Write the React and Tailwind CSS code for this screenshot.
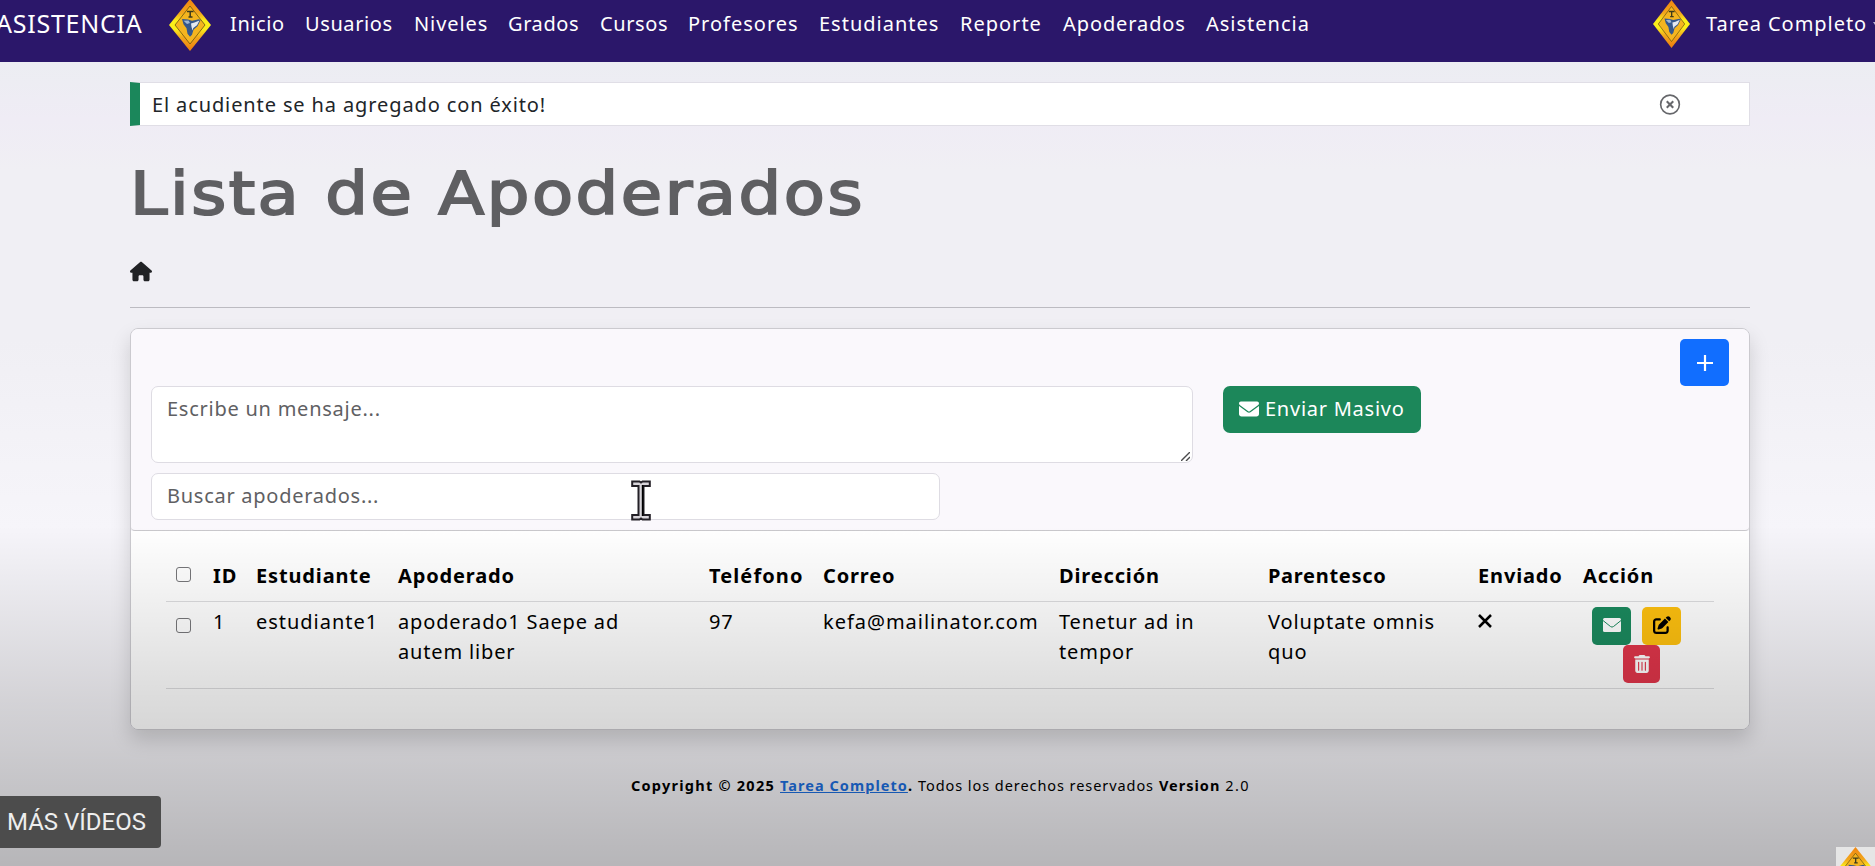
import { FaEnvelope, FaHouse, FaPenToSquare, FaTrashCan } from "react-icons/fa6";

const NAV = [
  { label: "Inicio", cls: "w-[75px] tracking-[0.6px]" },
  { label: "Usuarios", cls: "w-[109px] tracking-[0.6px]" },
  { label: "Niveles", cls: "w-[94px] tracking-[0.9px]" },
  { label: "Grados", cls: "w-[92px] tracking-[0.6px]" },
  { label: "Cursos", cls: "w-[88px] tracking-[0.6px]" },
  { label: "Profesores", cls: "w-[131px] tracking-[1px]" },
  { label: "Estudiantes", cls: "w-[141px] tracking-[1px]" },
  { label: "Reporte", cls: "w-[103px] tracking-[1px]" },
  { label: "Apoderados", cls: "w-[143px] tracking-[0.9px]" },
  { label: "Asistencia", cls: "w-[110px] tracking-[1px]" },
];

function Logo({ className }) {
  return (
    <svg viewBox="0 0 42 52" preserveAspectRatio="none" className={className}>
      <defs>
        <linearGradient id="rim" x1="0" y1="0" x2="0" y2="1">
          <stop offset="0.05" stopColor="#f08a12" />
          <stop offset="0.28" stopColor="#f2a81c" />
          <stop offset="0.42" stopColor="#fbee1a" />
          <stop offset="0.58" stopColor="#fbee1a" />
          <stop offset="0.74" stopColor="#f2a81c" />
          <stop offset="0.95" stopColor="#ee8410" />
        </linearGradient>
      </defs>
      <polygon points="21,0 42,26 21,52 0,26" fill="url(#rim)" />
      <polygon points="21,7 36,26 21,45 6,26" fill="#f4b51f" stroke="#6b5310" strokeWidth="0.8" />
      <path d="M18 12.500h6.500M21.200 12.500v5.500M19.500 18h4" stroke="#3d3a1c" strokeWidth="1.500" fill="none" />
      <path d="M13 20l6 .5 4 1.200 7-1.500 1.500 1-3 6-4 3.500-1.500 5-2 2-2.500-3-1-5.500-3-4z" fill="#35588c" />
      <path d="M22 24.500l3.500-1 5-2-2.500 4.800-3.700 2.700-.8 2.500-1-3.500z" fill="#e4e9f0" />
      <path d="M14.500 21.800l5-.3 1.500 2.500-3 1z" fill="#9db6d4" />
    </svg>
  );
}

function Navbar() {
  return (
    <header className="flex h-[62px] items-start bg-[#2b176a] text-[20px] leading-[30px] text-white">
      <div className="-ml-1 w-[173px] shrink-0 pt-[8px] text-[25px] tracking-[0.75px]">ASISTENCIA</div>
      <Logo className="-mt-[1px] h-[52px] w-[42px] shrink-0" />
      <nav className="flex pt-[9px] pl-[19px]">
        {NAV.map((item) => (
          <a key={item.label} className={`shrink-0 whitespace-nowrap ${item.cls}`}>
            {item.label}
          </a>
        ))}
      </nav>
      <div className="ml-auto flex w-[222px] shrink-0 whitespace-nowrap">
        <Logo className="h-[48px] w-[37px] shrink-0" />
        <span className="w-[183px] shrink-0 pt-[9px] pl-[16px] tracking-[0.95px]">Tarea Completo</span>
        <svg viewBox="0 0 2 3" className="mt-[22px] h-[3px] w-[2px] shrink-0 fill-[#b9b2d6]">
          <path d="M0 0h2v3z" />
        </svg>
      </div>
    </header>
  );
}

function Notice() {
  return (
    <div className="flex h-[44px] items-center border border-l-[10px] border-[#e0dee6] border-l-[#1b875b] bg-white pr-[68px] pl-[12px]">
      <p className="pt-[1px] text-[20px] leading-[30px] tracking-[0.88px] text-[#212529]">
        El acudiente se ha agregado con éxito!
      </p>
      <svg viewBox="0 0 22 22" className="ml-auto h-[21px] w-[22px]" fill="none" stroke="#66676b">
        <circle cx="11" cy="11" r="9.8" strokeWidth="1.7" />
        <path d="M7.6 7.6l6.8 6.8M14.4 7.6l-6.8 6.8" strokeWidth="2.200" />
      </svg>
    </div>
  );
}

function TextCursor() {
  return (
    <svg viewBox="0 0 20 41" className="absolute top-[7px] left-[480px] h-[41px] w-[20px]">
      <path
        d="M1.200 1.500h7.300l1.500 1 1.500-1h7.300v4.500h-6.300v29h6.300v4.500h-7.300l-1.500-1-1.500 1H1.200v-4.500h6.300v-29H1.200z"
        fill="#d8d5da"
        stroke="#232026"
        strokeWidth="2"
      />
      <path d="M11.600 5v31" stroke="#000" strokeWidth="1.600" />
    </svg>
  );
}

function CardHeader() {
  return (
    <div className="h-[202px] rounded-t-[7px] rounded-b-[4px] border-b border-[#c9c8cc] bg-[#faf8fc] px-5 pt-[10px]">
      <div className="flex justify-end">
        <button className="flex h-[47px] w-[49px] items-center justify-center rounded-[5px] bg-[#116eff]">
          <svg viewBox="0 0 16 16" className="h-4 w-4" stroke="#fff" strokeWidth="2.200">
            <path d="M8 0v16M0 8h16" />
          </svg>
        </button>
      </div>
      <div className="flex items-start">
        <div className="relative">
          <textarea
            className="block h-[77px] w-[1042px] resize-none rounded-[7px] border border-[#dedce3] bg-white px-[15px] py-[7px] text-[20px] leading-[30px] tracking-[0.75px] placeholder:text-[#5f6063]"
            placeholder="Escribe un mensaje..."
          />
          <svg viewBox="0 0 9 9" className="absolute right-[3px] bottom-[2px] h-[9px] w-[9px]" stroke="#4a4a4c" strokeWidth="1.400">
            <path d="M0 9L9 0M5 9l4-4" />
          </svg>
        </div>
        <button className="ml-[30px] flex h-[47px] w-[198px] items-center gap-[6px] rounded-[7px] bg-[#1c875a] pb-[2px] pl-4 text-[20px] leading-[30px] tracking-[0.75px] whitespace-nowrap text-white">
          <FaEnvelope className="h-5 w-5 shrink-0" />
          Enviar Masivo
        </button>
      </div>
      <div className="relative mt-[10px] w-[789px]">
        <input
          className="block h-[47px] w-full rounded-[7px] border border-[#dedce3] bg-white px-[15px] pb-[2px] text-[20px] leading-[30px] tracking-[0.73px] placeholder:text-[#5f6063]"
          placeholder="Buscar apoderados..."
        />
        <TextCursor />
      </div>
    </div>
  );
}

const GRID =
  "grid grid-cols-[47px_43px_142px_311px_114px_236px_209px_210px_105px_131px] border-b border-[#dddddf]";

function CheckBox({ className }) {
  return (
    <div className={`ml-[10px] h-[15px] w-[15px] rounded-[3px] border-[1.5px] border-[#77777a] bg-white ${className}`} />
  );
}

function GuardianTable() {
  return (
    <div className="h-[198px] rounded-b-[7px] bg-white pt-[25px] pr-[35px] pl-[35px] text-[20px] leading-[30px] tracking-[0.9px] whitespace-nowrap text-black">
      <div className={`${GRID} h-[46px] pt-[5px] font-bold tracking-[0.85px]`}>
        <CheckBox className="mt-[6px]" />
        <span>ID</span>
        <span>Estudiante</span>
        <span>Apoderado</span>
        <span className="tracking-[1.1px]">Teléfono</span>
        <span>Correo</span>
        <span>Dirección</span>
        <span className="tracking-[0.7px]">Parentesco</span>
        <span>Enviado</span>
        <span>Acción</span>
      </div>
      <div className={`${GRID} h-[87px] pt-[5px]`}>
        <CheckBox className="mt-[11px]" />
        <span>1</span>
        <span className="tracking-[0.97px]">estudiante1</span>
        <span className="tracking-[0.84px]">
          apoderado1 Saepe ad
          <br />
          autem liber
        </span>
        <span>97</span>
        <span className="tracking-[0.97px]">kefa@mailinator.com</span>
        <span>
          Tenetur ad in
          <br />
          tempor
        </span>
        <span>
          Voluptate omnis
          <br />
          quo
        </span>
        <svg viewBox="0 0 14 14" className="mt-[7px] h-[14px] w-[14px]" stroke="#000" strokeWidth="2.500">
          <path d="M1 1l12 12M13 1L1 13" />
        </svg>
        <div className="flex flex-wrap content-start pl-[9px]">
          <button className="flex h-[38px] w-[39px] items-center justify-center rounded-[5px] bg-[#1b8a5e]">
            <svg viewBox="0 0 18 14" className="-mt-[2px] h-[14px] w-[18px]">
              <rect width="18" height="14" rx="1.500" fill="#fff" />
              <path d="M0 2.500l7.500 6q1.500 1.200 3 0l7.500-6" fill="none" stroke="#1b8a5e" strokeWidth="1" />
            </svg>
          </button>
          <button className="ml-[11px] flex h-[38px] w-[39px] items-center justify-center rounded-[5px] bg-[#ffc10f]">
            <FaPenToSquare className="-mt-[2px] h-[18px] w-[18px] text-black" />
          </button>
          <button className="ml-[31px] flex h-[38px] w-[37px] items-center justify-center rounded-[5px] bg-[#e0354a]">
            <FaTrashCan className="h-[18px] w-[16px] text-white" />
          </button>
        </div>
      </div>
    </div>
  );
}

export default function App() {
  return (
    <div className="relative h-[866px] w-[1875px] overflow-hidden bg-[linear-gradient(180deg,#ecedf2_62px,#efecf5_120px,#f0eff4_170px,#f0eff4_340px,#f6f5fa_530px,#f6f5f9_866px)] font-['Noto_Sans',sans-serif]">
      <Navbar />
      <main className="mt-[20px] ml-[130px] w-[1620px]">
        <Notice />
        <h1 className="mt-[32px] mb-[30px] origin-left scale-x-[1.14] font-['DejaVu_Sans',sans-serif] text-[59px] leading-[72px] tracking-[2.2px] whitespace-nowrap text-[#5f5f62] [-webkit-text-stroke:1.9px_#5f5f62]">
          Lista de Apoderados
        </h1>
        <FaHouse className="mt-[31px] h-[21px] w-[22px] text-[#212225]" />
        <hr className="mt-[25px] border-[#bcbbc1]" />
        <section className="mt-[20px] rounded-[8px] border border-[#cbcacf] shadow-[0_10px_20px_rgba(0,0,0,0.15)]">
          <CardHeader />
          <GuardianTable />
        </section>
      </main>
      <footer className="mt-[45px] ml-[631px] flex gap-[5px] text-[14.500px] leading-[20px] tracking-[1px] whitespace-nowrap text-black">
        <b className="tracking-[1.25px]">Copyright © 2025</b>
        <b className="tracking-[1.05px]">
          <a className="text-[#1d6fe0] underline">Tarea Completo</a>.
        </b>
        <span className="tracking-[0.93px]">Todos los derechos reservados</span>
        <b>Version</b>
        <span className="tracking-[1.4px]">2.0</span>
      </footer>
      <div className="pointer-events-none absolute inset-0 bg-[linear-gradient(180deg,rgba(0,0,0,0)_525px,rgba(0,0,0,0.06)_600px,rgba(0,0,0,0.137)_697px,rgba(0,0,0,0.17)_745px,rgba(0,0,0,0.26)_866px)]" />
      <div className="absolute top-[796px] left-0 flex h-[52px] w-[161px] items-center rounded-r-[4px] bg-[#4c4c4c] pl-[7px] font-['Roboto',sans-serif] text-[24px] tracking-[0px] whitespace-nowrap text-[#eeeeee]">
        MÁS VÍDEOS
      </div>
      <div className="absolute top-[847px] left-[1836px] h-[19px] w-[39px] overflow-hidden bg-[#e6e6e6]">
        <Logo className="ml-[1px] h-[46px] w-[37px]" />
      </div>
    </div>
  );
}
